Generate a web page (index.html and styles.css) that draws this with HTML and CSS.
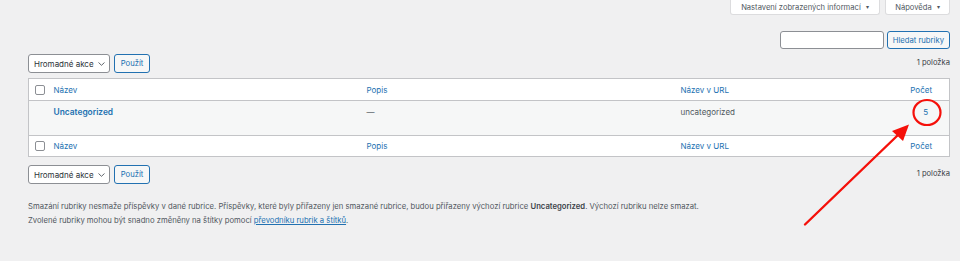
FILE: index.html
```html
<!DOCTYPE html>
<html lang="cs">
<head>
  <meta charset="UTF-8" />
  <title>Rubriky</title>
  <link rel="stylesheet" href="styles.css">
</head>
<body>
  <div class="wrap">
    <div class="screen-meta">
      <button class="meta-tab">Nastavení zobrazených informací <span class="caret">&#9662;</span></button>
      <button class="meta-tab">Nápověda <span class="caret">&#9662;</span></button>
    </div>

    <form class="search-box">
      <input type="search" class="search-input" aria-label="Hledat rubriky">
      <button type="button" class="btn">Hledat rubriky</button>
    </form>

    <div class="tablenav">
      <div class="bulk">
        <div class="select">Hromadné akce
          <svg class="chev" width="7" height="4" viewBox="0 0 7 4"><path d="M0.5 0.5 L3.5 3.3 L6.5 0.5" fill="none" stroke="#50575e" stroke-width="0.9"/></svg>
        </div>
        <button type="button" class="btn">Použít</button>
      </div>
      <span class="count">1 položka</span>
    </div>

    <table class="list">
      <colgroup>
        <col class="c-cb"><col class="c-name"><col class="c-desc"><col class="c-slug"><col class="c-posts">
      </colgroup>
      <thead>
        <tr>
          <td class="cb"><span class="check"></span></td>
          <th><a href="#">Název</a></th>
          <th><a href="#">Popis</a></th>
          <th><a href="#">Název v URL</a></th>
          <th class="num"><a href="#">Počet</a></th>
        </tr>
      </thead>
      <tbody>
        <tr class="row">
          <td></td>
          <td><a href="#" class="strong">Uncategorized</a></td>
          <td class="muted">—</td>
          <td>uncategorized</td>
          <td class="num"><a href="#">5</a></td>
        </tr>
      </tbody>
      <tfoot>
        <tr>
          <td class="cb"><span class="check"></span></td>
          <th><a href="#">Název</a></th>
          <th><a href="#">Popis</a></th>
          <th><a href="#">Název v URL</a></th>
          <th class="num"><a href="#">Počet</a></th>
        </tr>
      </tfoot>
    </table>

    <div class="tablenav bottom">
      <div class="bulk">
        <div class="select">Hromadné akce
          <svg class="chev" width="7" height="4" viewBox="0 0 7 4"><path d="M0.5 0.5 L3.5 3.3 L6.5 0.5" fill="none" stroke="#50575e" stroke-width="0.9"/></svg>
        </div>
        <button type="button" class="btn">Použít</button>
      </div>
      <span class="count">1 položka</span>
    </div>

    <div class="notes">
      <p>Smazání rubriky nesmaže příspěvky v dané rubrice. Příspěvky, které byly přiřazeny jen smazané rubrice, budou přiřazeny výchozí rubrice <strong>Uncategorized</strong>. Výchozí rubriku nelze smazat.</p>
      <p>Zvolené rubriky mohou být snadno změněny na štítky pomocí <a href="#" class="ul">převodníku rubrik a štítků</a>.</p>
    </div>
  </div>

  <!-- annotation drawn over the page -->
  <svg class="annot" width="960" height="261" viewBox="0 0 960 261">
    <ellipse cx="927" cy="112.5" rx="13.5" ry="12.5" fill="none" stroke="#f5100a" stroke-width="2.2"/>
    <line x1="805" y1="224.5" x2="898" y2="135" stroke="#f5100a" stroke-width="2.4" stroke-linecap="round"/>
    <polygon points="909,124.5 892,131 903,141" fill="#f5100a"/>
  </svg>
</body>
</html>
```

FILE: styles.css
```css
/* Base */
* {
  box-sizing: border-box;
}
html, body {
  margin: 0;
  height: 100%;
  background: #f0f0f1;
  color: #3c434a;
  font-family: Inter, "Liberation Sans", Arial, sans-serif;
  font-size: 8px;
  overflow: hidden;
}
a {
  color: #2271b1;
  text-decoration: none;
}
.wrap {
  padding: 0 10px 0 28px;
}

/* Screen options tabs */
.screen-meta {
  display: flex;
  justify-content: flex-end;
  gap: 5px;
}
.meta-tab {
  height: 15px;
  margin: 0;
  padding: 0;
  background: #fff;
  border: 1px solid #dcdcde;
  border-top: none;
  border-radius: 0 0 3px 3px;
  color: #50575e;
  font: inherit;
  font-size: 7.6px;
  line-height: 14px;
}
.meta-tab:first-child {
  width: 150px;
}
.meta-tab:last-child {
  width: 65px;
}
.caret {
  font-size: 6px;
  margin-left: 3px;
  vertical-align: 0.5px;
}

/* Search */
.search-box {
  display: flex;
  justify-content: flex-end;
  gap: 3px;
  margin: 16px 0 0;
}
.search-input {
  width: 104px;
  height: 18px;
  border: 1px solid #8c8f94;
  border-radius: 3px;
  background: #fff;
  margin: 0;
}
.btn {
  height: 18px;
  margin: 0;
  padding: 0 5px;
  background: #f6f7f7;
  border: 1px solid #2271b1;
  border-radius: 3px;
  color: #2271b1;
  font: inherit;
  font-size: 7.7px;
}

/* Table nav */
.tablenav {
  display: flex;
  justify-content: space-between;
  align-items: center;
  margin-top: 5px;
  height: 19px;
}
.tablenav.bottom {
  margin-top: 8px;
}
.bulk {
  display: flex;
  gap: 4px;
}
.select {
  display: flex;
  align-items: center;
  justify-content: space-between;
  width: 82px;
  height: 19px;
  padding: 0 4px 0 5px;
  background: #fff;
  border: 1px solid #8c8f94;
  border-radius: 3px;
  color: #2c3338;
  font-size: 8px;
}
.bulk .btn {
  height: 19px;
  width: 36px;
  padding: 0;
}
.count {
  color: #3c434a;
  font-size: 7.6px;
  padding-bottom: 2px;
}

/* List table */
.list {
  width: 100%;
  margin-top: 5px;
  border-collapse: collapse;
  table-layout: fixed;
  background: #fff;
  border: 1px solid #c3c4c7;
}
.c-cb { width: 25px; }
.c-name { width: 313px; }
.c-desc { width: 314px; }
.c-slug { width: 200px; }
.list th,
.list td {
  text-align: left;
  font-weight: normal;
  padding: 0;
  vertical-align: middle;
  font-size: 8px;
}
.list thead tr {
  height: 22px;
  border-bottom: 1px solid #c3c4c7;
}
.list tfoot tr {
  height: 21px;
  border-top: 1px solid #c3c4c7;
}
.list .num {
  text-align: right;
  padding-right: 17px;
}
.list .cb {
  padding-left: 6px;
}
.check {
  display: block;
  width: 10px;
  height: 10px;
  border: 1px solid #8c8f94;
  border-radius: 2px;
  background: #fff;
}
.row {
  height: 35px;
  background: #f6f7f7;
}
.row td {
  vertical-align: top;
  padding-top: 6px;
  color: #50575e;
}
.row td.num {
  padding-right: 21px;
}
.strong {
  font-weight: 600;
  font-size: 8.4px;
}
.muted {
  color: #50575e;
}

/* Notes */
.notes {
  margin-top: 16px;
  color: #50575e;
  font-size: 7.7px;
}
.notes p {
  margin: 0;
  line-height: 14px;
}
.notes strong {
  color: #3c434a;
  font-weight: 600;
}
.ul {
  text-decoration: underline;
}

/* Annotation */
.annot {
  position: absolute;
  top: 0;
  left: 0;
  pointer-events: none;
}
```
